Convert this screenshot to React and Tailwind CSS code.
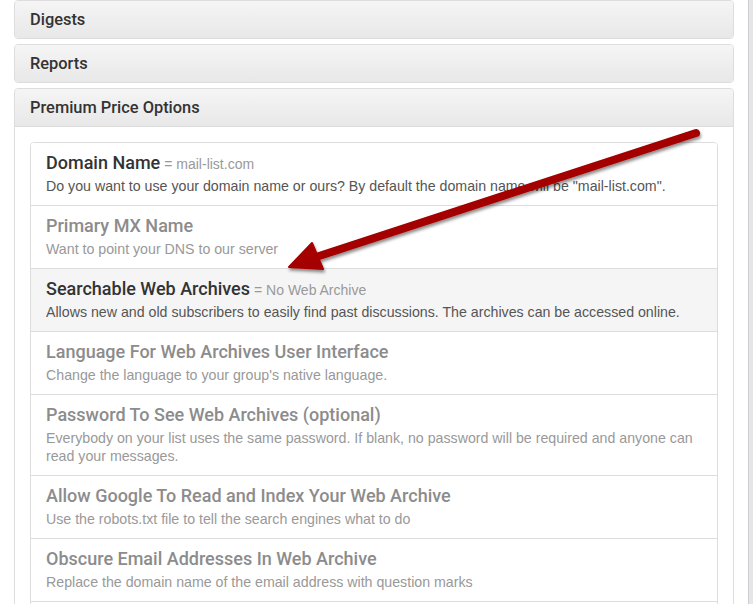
import React from "react";

const panels = ["Digests", "Reports"];

const options = [
  {
    title: "Domain Name",
    value: "mail-list.com",
    description:
      'Do you want to use your domain name or ours? By default the domain name will be "mail-list.com".',
    enabled: true,
  },
  {
    title: "Primary MX Name",
    description: "Want to point your DNS to our server",
  },
  {
    title: "Searchable Web Archives",
    value: "No Web Archive",
    description:
      "Allows new and old subscribers to easily find past discussions. The archives can be accessed online.",
    enabled: true,
    active: true,
  },
  {
    title: "Language For Web Archives User Interface",
    description: "Change the language to your group's native language.",
  },
  {
    title: "Password To See Web Archives (optional)",
    description:
      "Everybody on your list uses the same password. If blank, no password will be required and anyone can read your messages.",
  },
  {
    title: "Allow Google To Read and Index Your Web Archive",
    description: "Use the robots.txt file to tell the search engines what to do",
  },
  {
    title: "Obscure Email Addresses In Web Archive",
    description: "Replace the domain name of the email address with question marks",
  },
  {
    title: "Custom Footer",
    description: "Add your own text to the bottom of every message",
  },
];

const PanelHeading = ({ children }) => (
  <div className="bg-gradient-to-b from-[#f5f5f5] to-[#e8e8e8] px-[15px] py-[10px] text-[16.4px] leading-[17px] font-medium text-[#333] font-['Roboto',sans-serif]">
    {children}
  </div>
);

const Arrow = () => (
  <svg
    className="pointer-events-none absolute left-0 top-0"
    width="753"
    height="604"
    viewBox="0 0 753 604"
  >
    <defs>
      <filter id="arrowShadow" x="-10%" y="-10%" width="120%" height="130%">
        <feDropShadow dx="1" dy="2.5" stdDeviation="1.6" floodColor="#000" floodOpacity="0.45" />
      </filter>
    </defs>
    <g filter="url(#arrowShadow)">
      <line
        x1="316"
        y1="257"
        x2="696"
        y2="133"
        stroke="#a50000"
        strokeWidth="8"
        strokeLinecap="round"
      />
      <polygon
        points="289,267 312,243 323,269"
        fill="#a50000"
        stroke="#a50000"
        strokeWidth="2"
        strokeLinejoin="round"
      />
    </g>
  </svg>
);

export default function App() {
  return (
    <div className="relative flex h-[604px] w-[753px] overflow-hidden bg-white font-['Liberation_Sans',Arial,sans-serif]">
      <div className="flex w-[748px] shrink-0 flex-col gap-[5px] px-[14px]">
        {panels.map((name) => (
          <div key={name} className="shrink-0 overflow-hidden rounded-[4px] border border-[#ddd]">
            <PanelHeading>{name}</PanelHeading>
          </div>
        ))}
        <div className="shrink-0 rounded-t-[4px] border border-[#ddd]">
          <div className="overflow-hidden rounded-t-[4px] border-b border-[#ddd]">
            <PanelHeading>Premium Price Options</PanelHeading>
          </div>
          <div className="p-[15px]">
            <div className="divide-y divide-[#ddd] overflow-hidden rounded-[4px] border border-[#ddd]">
              {options.map((opt) => (
                <div
                  key={opt.title}
                  className={`px-[15px] py-[10px] ${opt.active ? "bg-[#f5f5f5]" : "bg-white"}`}
                >
                  <div className="mb-[5px] flex h-[19px] items-baseline gap-[4px] overflow-visible">
                    <span
                      className={`text-[18px] leading-[19px] font-medium font-['Roboto',sans-serif] ${
                        opt.enabled ? "text-[#333]" : "text-[#8c8c8c]"
                      }`}
                    >
                      {opt.title}
                    </span>
                    {opt.value && (
                      <span className="text-[14px] leading-[19px] text-[#999]">= {opt.value}</span>
                    )}
                  </div>
                  <p
                    className={`text-[14.2px] leading-[18px] ${
                      opt.enabled ? "text-[#555]" : "text-[#999]"
                    }`}
                  >
                    {opt.description}
                  </p>
                </div>
              ))}
            </div>
          </div>
        </div>
      </div>
      <div className="w-[5px] shrink-0 border-l border-[#c9cdd1] bg-[#e6e6e6]" />
      <Arrow />
    </div>
  );
}
